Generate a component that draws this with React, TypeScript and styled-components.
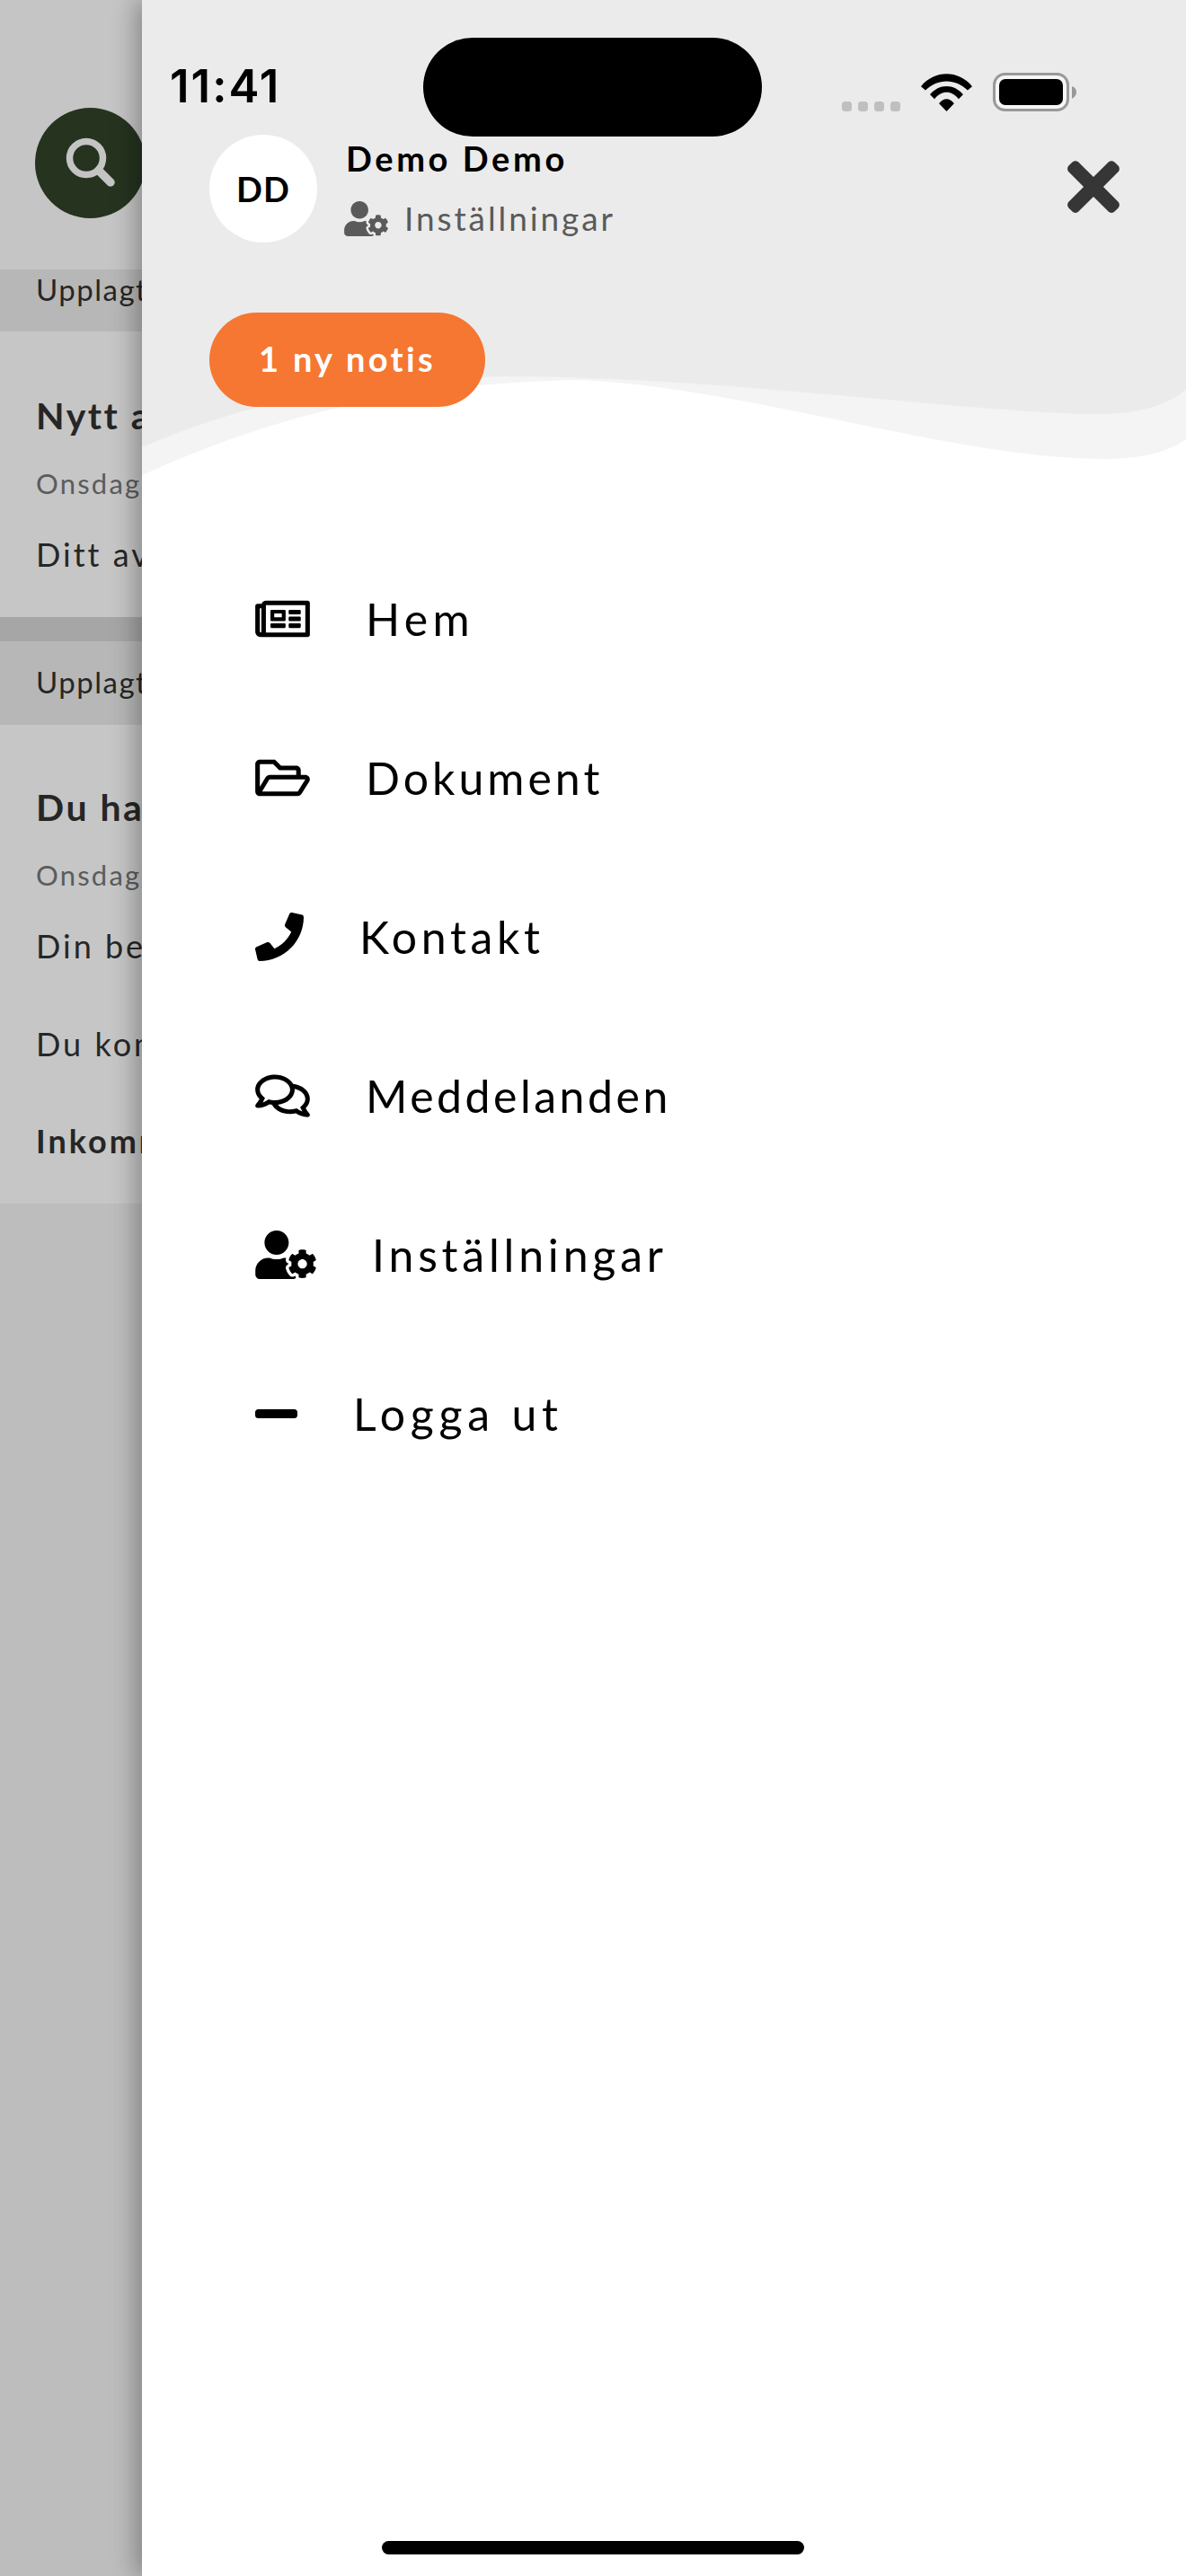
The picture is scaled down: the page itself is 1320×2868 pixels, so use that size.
import React from "react";
import styled, { createGlobalStyle } from "styled-components";
import {
  FaRegNewspaper,
  FaRegFolderOpen,
  FaPhone,
  FaRegComments,
  FaUserCog,
  FaMinus,
  FaTimes,
} from "react-icons/fa";

const Global = createGlobalStyle`
  html, body { margin: 0; padding: 0; background: #bdbdbd; }
  * { box-sizing: border-box; }
  body { font-family: "Lato", "Noto Sans", sans-serif; }
`;

const Screen = styled.div`
  position: relative;
  display: flex;
  width: 1320px;
  height: 2868px;
  overflow: hidden;
  background: #bdbdbd;
`;

const Behind = styled.div`
  width: 158px;
  flex: none;
  display: flex;
  flex-direction: column;
  overflow: hidden;
  white-space: nowrap;
  color: #262626;
`;

const TopBar = styled.div`
  height: 300px;
  flex: none;
  padding: 120px 0 0 39px;
  background: #c5c5c5;
`;

const SearchCircle = styled.div`
  width: 123px;
  height: 123px;
  border-radius: 50%;
  background: #25331f;
  display: flex;
  align-items: center;
  justify-content: center;
`;

const DateBand = styled.div<{ $h: number; $pt: number }>`
  height: ${(p) => p.$h}px;
  flex: none;
  background: #b7b7b7;
  padding: ${(p) => p.$pt}px 0 0 40px;
  font-size: 33px;
  letter-spacing: 1.5px;
  line-height: 40px;
`;

const Card = styled.div<{ $h: number; $pt: number }>`
  height: ${(p) => p.$h}px;
  flex: none;
  background: #c6c6c6;
  padding: ${(p) => p.$pt}px 0 0 40px;
`;

const Gap = styled.div`
  height: 27px;
  flex: none;
  background: #a6a6a6;
`;

const CardTitle = styled.div`
  font-size: 41px;
  font-weight: 700;
  letter-spacing: 2.5px;
  line-height: 48px;
`;

const CardDate = styled.div`
  font-size: 31px;
  color: #5c5c5c;
  letter-spacing: 2.2px;
  line-height: 38px;
  margin-top: 32px;
`;

const CardText = styled.div<{ $mt: number; $bold?: boolean }>`
  font-size: 36px;
  font-weight: ${(p) => (p.$bold ? 700 : 400)};
  letter-spacing: 3px;
  line-height: 44px;
  margin-top: ${(p) => p.$mt}px;
`;

const Drawer = styled.div`
  position: relative;
  flex: 1;
  background: #fff;
  box-shadow: -6px 0 26px rgba(0, 0, 0, 0.32);
  display: flex;
  flex-direction: column;
`;

const Header = styled.header`
  position: relative;
  height: 600px;
  flex: none;
`;

const Wave = styled.svg`
  position: absolute;
  left: 0;
  top: 0;
`;

const StatusBar = styled.div`
  position: relative;
  height: 150px;
  display: flex;
  align-items: flex-start;
  padding: 65px 122px 0 31px;
`;

const Time = styled.div`
  font-family: "Inter", sans-serif;
  font-size: 51px;
  font-weight: 600;
  line-height: 62px;
  color: #000;
  letter-spacing: 2px;
`;

const Island = styled.div`
  position: absolute;
  left: 313px;
  top: 42px;
  width: 377px;
  height: 110px;
  border-radius: 55px;
  background: #000;
`;

const StatusIcons = styled.div`
  margin-left: auto;
  display: flex;
  align-items: flex-end;
  height: 51px;
  margin-top: 8px;
`;

const Dots = styled.div`
  display: flex;
  gap: 7px;
  margin-right: 22px;
`;

const Dot = styled.span`
  width: 11px;
  height: 11px;
  border-radius: 3.5px;
  background: #bfbfbf;
`;

const Battery = styled.svg`
  margin-left: 22px;
  display: block;
`;

const UserRow = styled.div`
  position: relative;
  display: flex;
  align-items: center;
  height: 120px;
  padding: 0 75px;
`;

const Avatar = styled.div`
  width: 120px;
  height: 120px;
  border-radius: 50%;
  background: #fff;
  color: #000;
  font-size: 38px;
  font-weight: 700;
  letter-spacing: 1px;
  display: flex;
  align-items: center;
  justify-content: center;
  flex: none;
`;

const UserInfo = styled.div`
  margin-left: 33px;
  display: flex;
  flex-direction: column;
`;

const UserName = styled.div`
  font-size: 38px;
  font-weight: 700;
  letter-spacing: 3.6px;
  line-height: 46px;
  color: #000;
  margin: -2px 0 0 -1px;
`;

const SettingsLink = styled.div`
  display: flex;
  align-items: center;
  color: #5a5a5a;
  font-size: 37px;
  letter-spacing: 2.9px;
  line-height: 44px;
  margin-top: 22px;
  gap: 18px;
  margin-left: -3px;
  svg {
    width: 49px;
    height: 39px;
  }
`;

const CloseButton = styled.div`
  margin-left: auto;
  margin-right: -1px;
  color: #363636;
  display: flex;
  margin-top: -4px;
  svg {
    width: 58px;
    height: 84px;
  }
`;

const NoticePill = styled.div`
  position: relative;
  margin: 78px 0 0 75px;
  width: 307px;
  height: 105px;
  padding-bottom: 4px;
  border-radius: 53px;
  background: #f57731;
  color: #fff;
  font-size: 38px;
  font-weight: 700;
  letter-spacing: 3.3px;
  display: flex;
  align-items: center;
  justify-content: center;
`;

const Nav = styled.nav`
  display: flex;
  flex-direction: column;
  padding-left: 126px;
`;

const NavRow = styled.div<{ $iconWidth: number }>`
  height: 177px;
  display: flex;
  align-items: center;
  gap: 62px;
  color: #000;
  font-size: 50px;
  svg {
    width: ${(p) => p.$iconWidth}px;
    height: 54px;
    flex: none;
  }
`;

const NavLabel = styled.span<{ $track: number }>`
  letter-spacing: ${(p) => p.$track}px;
`;

const HomeIndicator = styled.div`
  position: absolute;
  left: 425px;
  bottom: 24px;
  width: 470px;
  height: 15px;
  border-radius: 8px;
  background: #000;
`;

const items: [React.ComponentType, string, number, number][] = [
  [FaRegNewspaper, "Hem", 5.4, 61],
  [FaRegFolderOpen, "Dokument", 4.0, 61],
  [FaPhone, "Kontakt", 4.6, 54],
  [FaRegComments, "Meddelanden", 3.5, 61],
  [FaUserCog, "Inställningar", 4.8, 68],
  [FaMinus, "Logga ut", 5.8, 47],
];

export default function App() {
  return (
    <Screen>
      <Global />
      <Behind>
        <TopBar>
          <SearchCircle>
            <svg width="60" height="60" viewBox="0 0 60 60">
              <circle cx="25" cy="24" r="18.5" fill="none" stroke="#c4c4c4" strokeWidth="7.5" />
              <path d="M39 38 L52 51" stroke="#c4c4c4" strokeWidth="9.5" strokeLinecap="round" />
            </svg>
          </SearchCircle>
        </TopBar>
        <DateBand $h={69} $pt={2}>Upplagt</DateBand>
        <Card $h={318} $pt={70}>
          <CardTitle>Nytt avtal</CardTitle>
          <CardDate>Onsdag</CardDate>
          <CardText $mt={38}>Ditt avtal</CardText>
        </Card>
        <Gap />
        <DateBand $h={93} $pt={25}>Upplagt</DateBand>
        <Card $h={533} $pt={68}>
          <CardTitle>Du har</CardTitle>
          <CardDate>Onsdag</CardDate>
          <CardText $mt={38}>Din begäran</CardText>
          <CardText $mt={65}>Du kommer</CardText>
          <CardText $mt={64} $bold>Inkommen</CardText>
        </Card>
      </Behind>
      <Drawer>
        <Header>
          <Wave width="1162" height="560" viewBox="158 0 1162 560">
            <path
              d="M158 529 C 300 465 440 428 640 423 C 820 428 1060 511 1230 511 C 1270 511 1300 503 1320 489 V 0 H 158 Z"
              fill="#f4f4f4"
            />
            <path
              d="M158 498 C 280 444 410 424 560 419 C 800 419 1090 461 1224 461 C 1265 461 1298 452 1320 434 V 0 H 158 Z"
              fill="#ebebeb"
            />
          </Wave>
          <StatusBar>
            <Time>11:41</Time>
            <Island />
            <StatusIcons>
              <Dots>
                <Dot />
                <Dot />
                <Dot />
                <Dot />
              </Dots>
              <svg width="59" height="43" viewBox="72 38 176 128">
                <path d="M75 83 C120 28 200 28 245 83 L230 96 C190 56 130 56 90 96 Z" fill="#000" />
                <path d="M105 110 C135 73 185 73 215 110 L200 125 C178 95 142 95 120 125 Z" fill="#000" />
                <path d="M135 140 C150 120 170 120 185 140 L160 166 Z" fill="#000" />
              </svg>
              <Battery width="93" height="43" viewBox="0 0 93 43">
                <rect x="1.5" y="1.5" width="82" height="40" rx="12" fill="#f6f6f6" stroke="#999" strokeWidth="3" />
                <rect x="7" y="7" width="71" height="29" rx="7" fill="#000" />
                <path d="M88 15 C91 16 93 18 93 22 C93 25 91 27 88 29 Z" fill="#999" />
              </Battery>
            </StatusIcons>
          </StatusBar>
          <UserRow>
            <Avatar>DD</Avatar>
            <UserInfo>
              <UserName>Demo Demo</UserName>
              <SettingsLink>
                <FaUserCog />
                Inställningar
              </SettingsLink>
            </UserInfo>
            <CloseButton>
              <FaTimes />
            </CloseButton>
          </UserRow>
          <NoticePill>1 ny notis</NoticePill>
        </Header>
        <Nav>
          {items.map(([Icon, label, track, width]) => (
            <NavRow key={label} $iconWidth={width}>
              <Icon />
              <NavLabel $track={track}>{label}</NavLabel>
            </NavRow>
          ))}
        </Nav>
      </Drawer>
      <HomeIndicator />
    </Screen>
  );
}
